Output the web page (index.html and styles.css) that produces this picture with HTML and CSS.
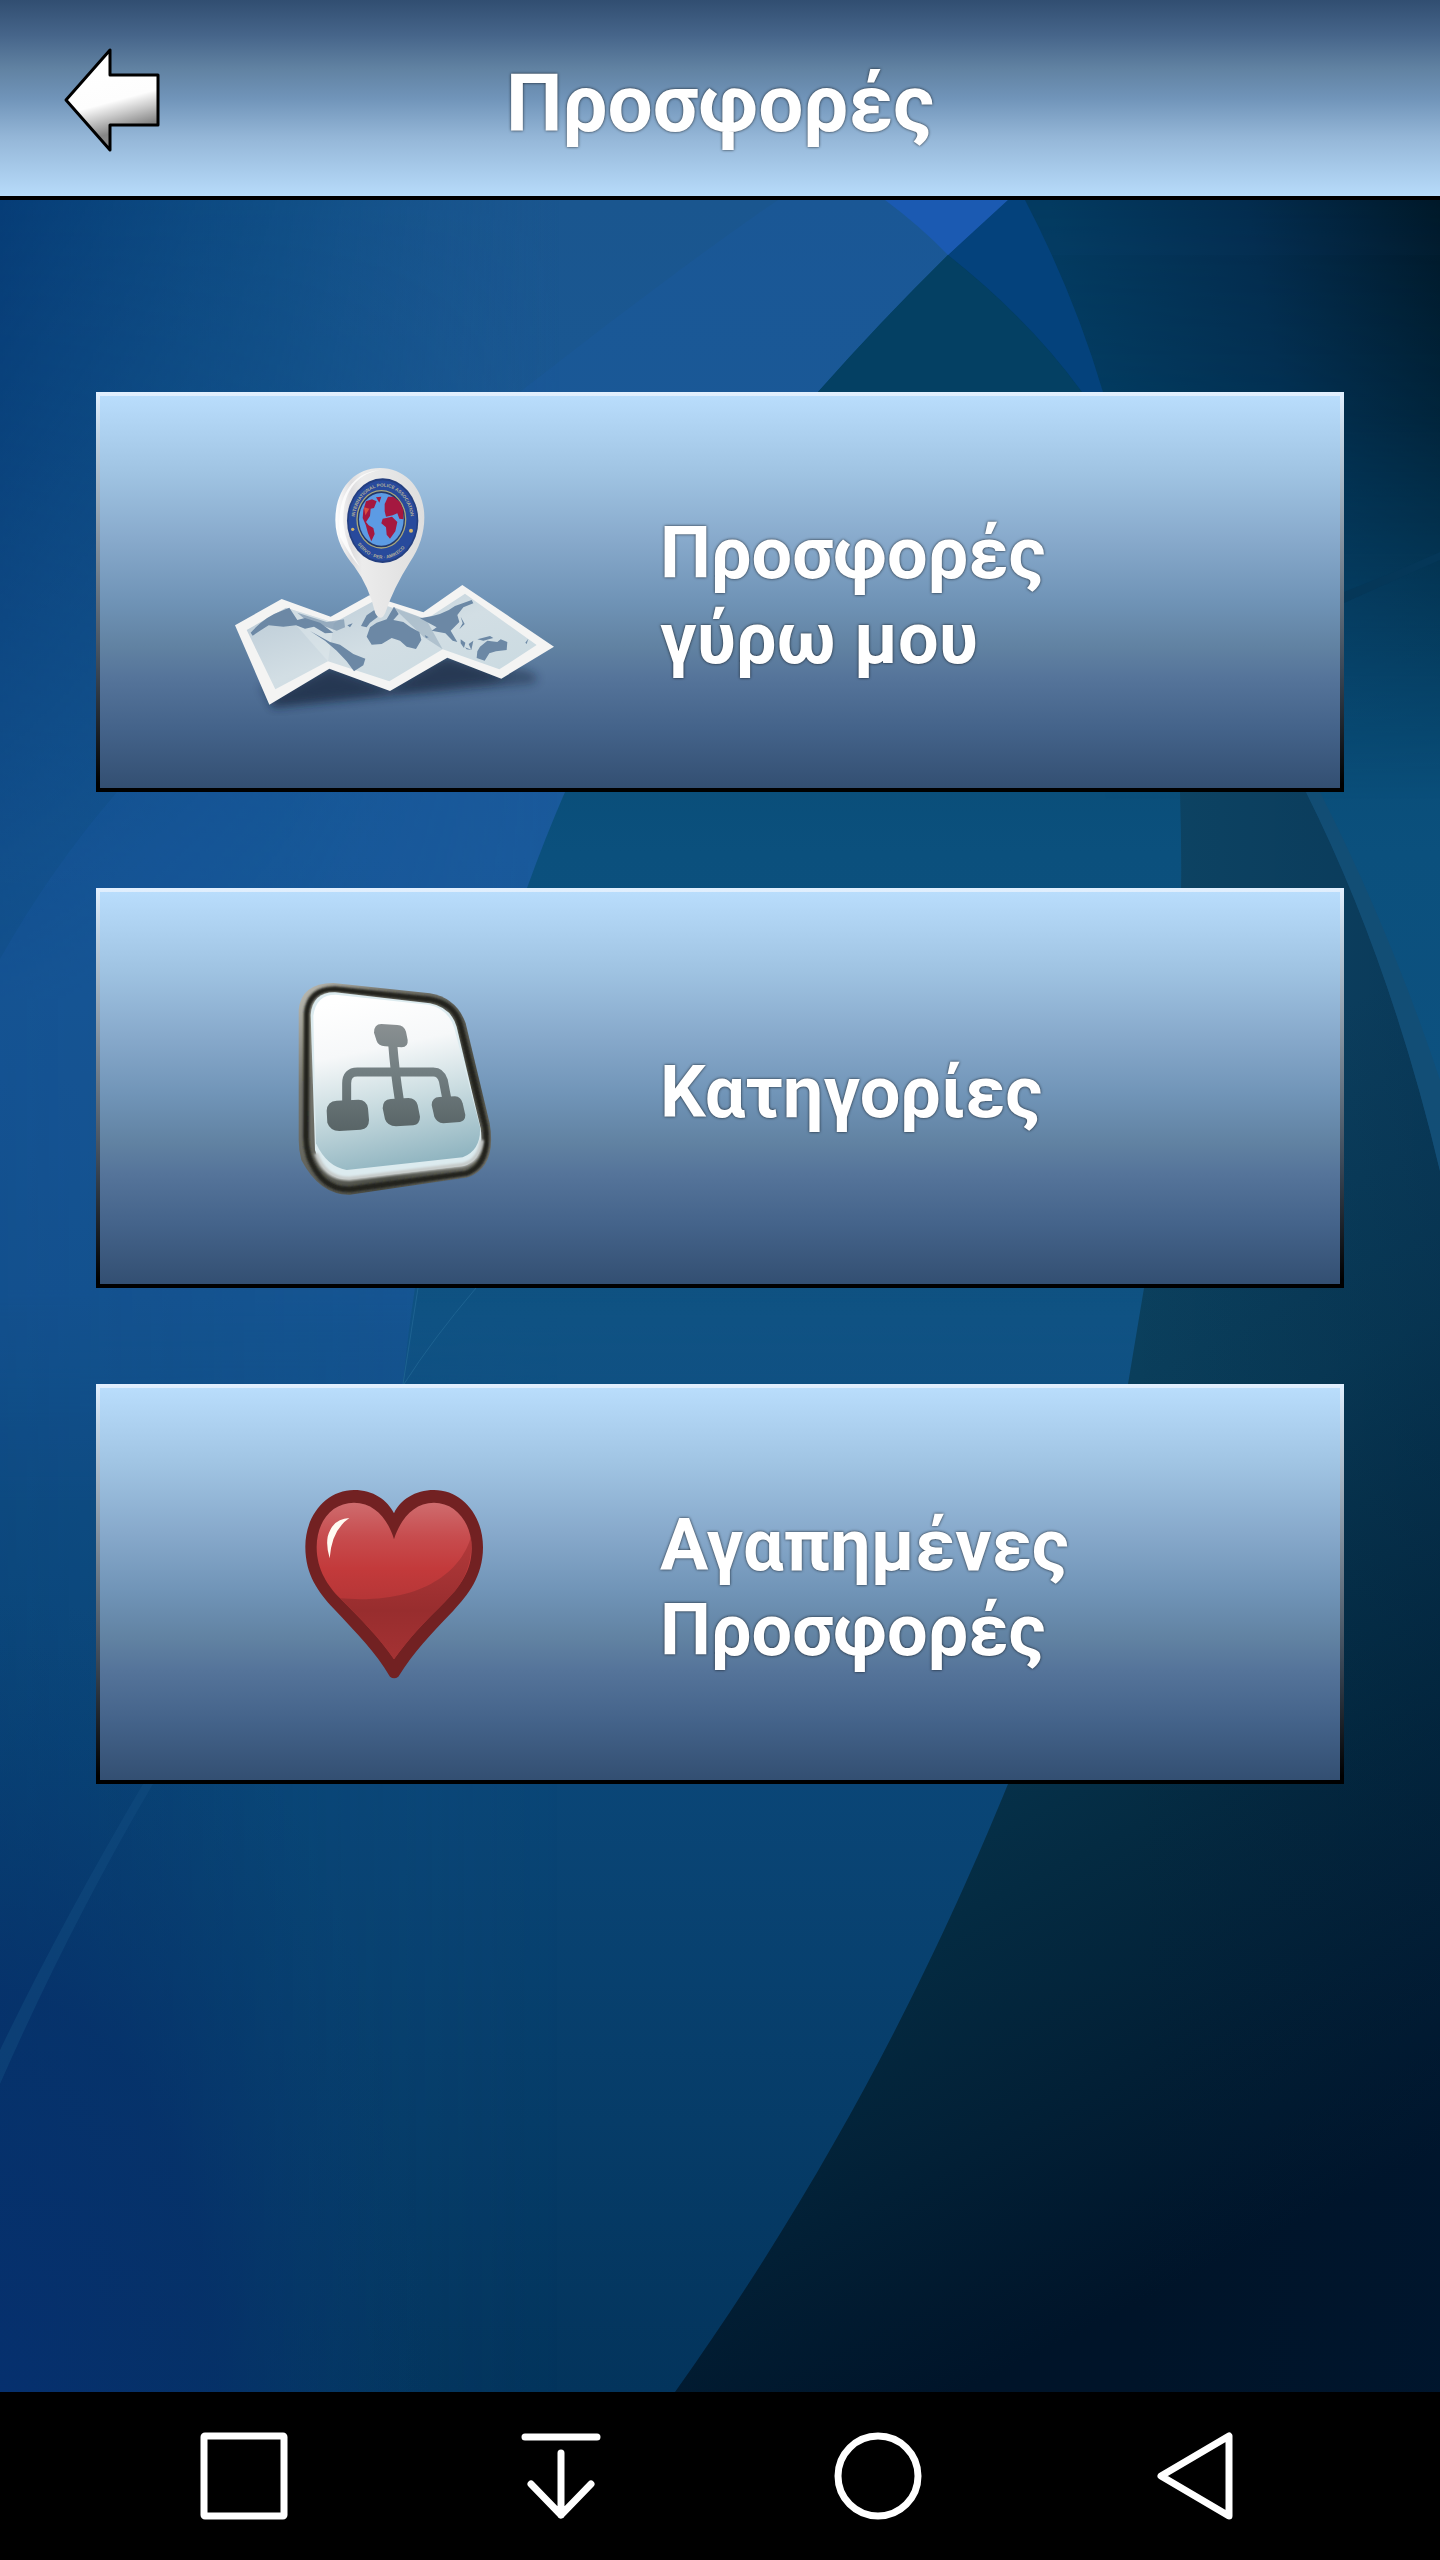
FILE: index.html
```html
<!DOCTYPE html>
<html lang="el">
<head>
<meta charset="utf-8">
<meta name="viewport" content="width=device-width, initial-scale=1">
<title>Προσφορές</title>
<link rel="stylesheet" href="styles.css">
</head>
<body>
<div class="screen">
  <header class="topbar">
    <button class="back" type="button" aria-label="Πίσω">
      <svg width="100" height="108" viewBox="0 0 100 108" aria-hidden="true">
        <defs>
          <linearGradient id="arrowFill" gradientUnits="userSpaceOnUse" x1="42" y1="18" x2="62" y2="92">
            <stop offset="0" stop-color="#fff"/><stop offset=".5" stop-color="#fdfdfd"/>
            <stop offset=".68" stop-color="#c9c9c9"/><stop offset=".9" stop-color="#858585"/><stop offset="1" stop-color="#8a8a8a"/>
          </linearGradient>
        </defs>
        <path d="M4 54 48 4V29H96V79H48V104Z" fill="url(#arrowFill)" stroke="#000" stroke-width="3" stroke-linejoin="round"/>
      </svg>
    </button>
    <h1 class="title">Προσφορές</h1>
  </header>

  <main class="content">
    <svg class="backdrop" viewBox="0 200 1440 2192" preserveAspectRatio="none" aria-hidden="true">
      <defs>
        <linearGradient id="leftFade" x1="0" y1="0" x2="0" y2="1">
          <stop offset="0" stop-color="#1a568f"/><stop offset=".3" stop-color="#195a98"/><stop offset=".5" stop-color="#15548c"/>
          <stop offset=".72" stop-color="#0a4677"/><stop offset="1" stop-color="#03345c"/>
        </linearGradient>
        <linearGradient id="edgeShade" x1="0" y1="0" x2="1" y2="0">
          <stop offset="0" stop-color="#043a74" stop-opacity=".9"/><stop offset=".5" stop-color="#06467c" stop-opacity=".5"/><stop offset="1" stop-color="#15548c" stop-opacity="0"/>
        </linearGradient>
        <linearGradient id="edgeMask" gradientUnits="userSpaceOnUse" x1="0" y1="200" x2="0" y2="1000">
          <stop offset="0" stop-color="#fff"/><stop offset="1" stop-color="#444"/>
        </linearGradient>
        <mask id="fadeEdge" maskUnits="userSpaceOnUse" x="0" y="200" width="560" height="2192"><rect y="200" width="560" height="2192" fill="url(#edgeMask)"/></mask>
        <radialGradient id="corner" gradientUnits="userSpaceOnUse" cx="0" cy="0" r="1" gradientTransform="translate(0 2392) scale(430 800)">
          <stop offset="0" stop-color="#06306e"/><stop offset=".5" stop-color="#062f6a" stop-opacity=".75"/><stop offset="1" stop-color="#083c70" stop-opacity="0"/>
        </radialGradient>
        <linearGradient id="midFade" gradientUnits="userSpaceOnUse" x1="0" y1="255" x2="0" y2="2392">
          <stop offset="0" stop-color="#043e5e"/><stop offset=".08" stop-color="#044568"/><stop offset=".28" stop-color="#0b507d"/>
          <stop offset=".5" stop-color="#0f5282"/><stop offset=".72" stop-color="#074672"/><stop offset="1" stop-color="#03345c"/>
        </linearGradient>
        <linearGradient id="midMask" gradientUnits="userSpaceOnUse" x1="0" y1="1290" x2="0" y2="1560">
          <stop offset="0" stop-color="#fff"/><stop offset="1" stop-color="#000"/>
        </linearGradient>
        <mask id="fadeDown" maskUnits="userSpaceOnUse" x="0" y="200" width="1440" height="2192"><rect y="200" width="1440" height="2192" fill="url(#midMask)"/></mask>
        <linearGradient id="night" gradientUnits="userSpaceOnUse" x1="1060" y1="260" x2="1440" y2="190">
          <stop offset="0" stop-color="#033a60"/><stop offset=".5" stop-color="#032c4e"/><stop offset="1" stop-color="#001828"/>
        </linearGradient>
        <linearGradient id="nightMask" gradientUnits="userSpaceOnUse" x1="0" y1="200" x2="0" y2="800">
          <stop offset="0" stop-color="#fff"/><stop offset=".35" stop-color="#ccc"/><stop offset="1" stop-color="#000"/>
        </linearGradient>
        <mask id="fadeNight" maskUnits="userSpaceOnUse" x="0" y="200" width="1440" height="700"><rect y="200" width="1440" height="700" fill="url(#nightMask)"/></mask>
        <linearGradient id="dark" gradientUnits="userSpaceOnUse" x1="960" y1="1200" x2="1440" y2="2150">
          <stop offset="0" stop-color="#0d4464"/><stop offset=".3" stop-color="#093c58"/><stop offset=".6" stop-color="#042b42"/><stop offset="1" stop-color="#001429"/>
        </linearGradient>
        <linearGradient id="darkEdge" x1="0" y1="0" x2="1" y2="0">
          <stop offset=".6" stop-color="#001a38" stop-opacity="0"/><stop offset="1" stop-color="#001a38" stop-opacity=".25"/>
        </linearGradient>
      </defs>
      <rect y="200" width="1440" height="2192" fill="url(#leftFade)"/>
      <rect y="200" width="560" height="2192" fill="url(#edgeShade)" mask="url(#fadeEdge)"/>
      <path d="M778 200C690 260 600 330 520 392C360 530 215 660 117 792Q50 870 0 959V1500H400L415 1288C480 1000 560 760 818 392L1008 200Z" fill="#1d5cae" opacity=".2" mask="url(#fadeDown)"/>
      <path d="M948 255Q880 322 818 392Q640 600 565 792Q545 838 527 888Q450 1090 415 1288Q407 1340 403 1384L390 1560H1440V255Z" fill="url(#midFade)" mask="url(#fadeDown)"/>
      <path d="M948 255L1005 200H1440V900H1110Q1108 560 948 255Z" fill="url(#night)" mask="url(#fadeNight)"/>
      <path d="M948 255Q880 322 818 392H1082Q1030 320 948 255Z" fill="#044063"/>
      <path d="M948 255L1008 200H1025Q1074 294 1103 392H1082Q1030 320 948 255Z" fill="#04427c"/>
      <path d="M885 200H1008L948 255Q920 226 885 200Z" fill="#1b5ab2"/>
      <rect y="1300" width="700" height="1092" fill="url(#corner)"/>
      <path d="M1344 592Q1395 572 1440 552V560Q1395 580 1344 603Z" fill="#053758"/>
      <path d="M1180 792H1306Q1390 960 1440 1171V2392H675C840 2160 940 1950 1008 1784Q1092 1570 1128 1384L1144 1288Q1188 1040 1180 792Z" fill="url(#dark)"/>
      <path d="M1180 792H1306Q1390 960 1440 1171V2392H675C840 2160 940 1950 1008 1784Q1092 1570 1128 1384L1144 1288Q1188 1040 1180 792Z" fill="url(#darkEdge)"/>
      <path d="M1306 792H1320Q1390 930 1440 1080V1171Q1390 960 1306 792Z" fill="#154d72" opacity=".7"/>
      <path d="M476 1288Q432 1340 404 1384M418 1288L403 1384" fill="none" stroke="#1d6291" stroke-width="1"/>
      <path d="M143 1784Q60 1925 0 2050V2084Q70 1925 153 1784Z" fill="#124c80" opacity=".5"/>
    </svg>

    <nav class="menu" aria-label="Προσφορές">
      <a class="card" href="#nearby">
        <span class="card-icon">
          <svg width="370" height="304" viewBox="0 0 1110 912" aria-hidden="true">
            <defs>
              <linearGradient id="pin" x1="0" y1="0" x2="1" y2="0"><stop offset="0" stop-color="#fff"/><stop offset=".18" stop-color="#dedddf"/><stop offset=".3" stop-color="#ececec"/><stop offset="1" stop-color="#dedede"/></linearGradient>
              <linearGradient id="sheet" x1="0" y1="0" x2="1" y2="1"><stop offset="0" stop-color="#b8c8d4"/><stop offset=".5" stop-color="#d2dee4"/><stop offset="1" stop-color="#c8d9e0"/></linearGradient>
              <filter id="soft" x="-20%" y="-50%" width="140%" height="200%"><feGaussianBlur stdDeviation="14"/></filter>
              <path id="arcTop" d="M434 262A85 106 0 1 1 602 262"/>
              <path id="arcBottom" d="M426 272A95 114 0 0 0 606 284"/>
            </defs>
            <path d="M150 740L190 800Q560 770 960 732Q1010 715 950 690L700 650 350 680Z" fill="#101f33" opacity=".4" filter="url(#soft)"/>
            <path d="M182 780L355 686L540 752L710 650L870 706L900 706L850 725L540 760L190 800Z" fill="#142439" opacity=".5" filter="url(#soft)"/>
            <path d="M75 556 215 477 362 530 478 466 640 517 757 435 1032 620 874 716 712 653 540 753 358 686 178 794Z" fill="#f4f4f3"/>
            <path d="M110 570 228 503 372 548 490 484 648 538 765 461 980 615 868 688 698 628 538 724 354 664 196 748Z" fill="url(#sheet)"/>
            <path d="M228 503 372 548 354 664 245 540Z" fill="#e3ebee" opacity=".45"/>
            <path d="M548 500 648 538 698 628 640 590Z" fill="#9aafc0" opacity=".6"/>
            <g fill="#6c88a5">
              <path d="M122 578Q165 530 212 514L238 503 262 540 285 534 330 548 370 578 345 580 312 560 285 566 258 556 220 560 176 556 150 572 128 587Z"/>
              <path d="M262 518 300 530 350 546 402 538 405 562 380 572 335 556 290 542Z" opacity=".6"/>
              <path d="M300 573 360 606 390 614 430 642 466 656 460 676 432 694 410 664 380 632 345 602Z"/>
              <path d="M412 556 428 550 420 562ZM453 558 470 526 493 510 504 530 480 548 470 562Z"/>
              <path d="M500 548 530 538 552 500 566 522 550 540 580 546 602 562 628 576 634 600 618 627 590 620 570 602 545 594 515 612 485 614 470 590 480 562Z"/>
              <path d="M630 535Q700 526 735 498L785 480 790 490 760 502 742 525 748 546 722 572 742 606 728 602 706 580 665 572 680 562Z"/>
              <path d="M752 530 764 552 748 568 758 550ZM752 598 766 608 762 624 752 610ZM776 612 790 602 784 630ZM802 598 840 588 850 594 820 602ZM765 622 785 630 770 628Z"/>
              <path d="M810 620 832 602 862 606 872 598 892 606 890 630 858 634 838 640 824 662 800 654 802 634ZM946 608 955 596 950 612ZM644 585 656 592 648 594Z"/>
            </g>
            <path d="M510 84C430 84 376 150 376 240C376 300 405 345 432 378Q478 440 496 520Q512 548 526 518Q550 445 600 366C628 325 643 280 643 232C643 145 585 84 510 84Z" fill="url(#pin)"/>
            <path d="M390 290C375 170 430 95 510 91C440 100 395 160 400 250Q408 320 450 380Q420 348 390 290Z" fill="#fff" opacity=".8"/>
            <ellipse cx="518" cy="242" rx="107" ry="127" fill="#243f80"/>
            <ellipse cx="518" cy="242" rx="102" ry="121" fill="#284a9c"/>
            <ellipse cx="514" cy="238" rx="73" ry="86" fill="#243768" stroke="#a9a87c" stroke-width="4"/>
            <ellipse cx="514" cy="238" rx="67" ry="79" fill="#5c9be4"/>
            <path d="M460 210 468 184 486 178 500 184 492 204 482 206 480 228 468 246 476 256 490 264 494 282 484 304 474 280 467 254 458 234ZM498 172 514 170 508 188ZM524 192 534 170 550 170 570 186 580 210 580 238 568 236 562 220 548 226 528 230 524 214ZM518 236 546 230 562 246 556 274 540 296 530 284 528 262 514 250Z" fill="#a51840"/>
            <path d="M462 202 478 206 466 226Z" fill="#db5040"/>
            <g class="seal-text">
              <text><textPath href="#arcTop" startOffset="50%" text-anchor="middle">INTERNATIONAL POLICE ASSOCIATION</textPath></text>
              <text><textPath href="#arcBottom" startOffset="50%" text-anchor="middle">SERVO · PER · AMIKECO</textPath></text>
            </g>
            <g fill="#d5b568"><circle cx="428" cy="268" r="5"/><circle cx="603" cy="272" r="6"/></g>
          </svg>
        </span>
        <span class="card-label">Προσφορές<br>γύρω μου</span>
      </a>

      <a class="card" href="#categories">
        <span class="card-icon">
          <svg width="250" height="256" viewBox="0 0 750 768" aria-hidden="true">
            <defs>
              <linearGradient id="rim" x1="0" y1="0" x2="1" y2="1"><stop offset="0" stop-color="#c0c0b8"/><stop offset=".25" stop-color="#77776f"/><stop offset=".7" stop-color="#4b4d46"/><stop offset="1" stop-color="#85857e"/></linearGradient>
              <linearGradient id="glass" x1=".35" y1="0" x2=".55" y2="1"><stop offset="0" stop-color="#fff"/><stop offset=".3" stop-color="#f6f8f9"/><stop offset=".6" stop-color="#cbdde1"/><stop offset="1" stop-color="#8eb3bf"/></linearGradient>
              <linearGradient id="node" gradientUnits="userSpaceOnUse" x1="0" y1="190" x2="0" y2="515"><stop offset="0" stop-color="#8a9092"/><stop offset=".45" stop-color="#727e81"/><stop offset="1" stop-color="#586466"/></linearGradient>
              <filter id="rimBlur"><feGaussianBlur stdDeviation="3"/></filter>
            </defs>
            <path d="M86 150Q93 70 190 69L480 100Q560 114 587 190L659 490Q681 622 592 652L240 704Q150 706 94 600Q86 570 86 540Z" fill="url(#rim)"/>
            <path d="M110 160Q117 87 195 87L480 118Q555 132 571 195L646 500Q662 612 588 640L240 688Q155 690 117 590Q108 560 108 530Z" fill="none" stroke="#20211c" stroke-width="17" filter="url(#rimBlur)"/>
            <path d="M122 165Q128 96 195 97L480 130Q543 142 560 200L632 505Q645 600 580 618L240 658Q160 661 135 570Z" fill="#dcebef"/>
            <path d="M138 580Q165 658 240 656L580 614Q628 602 636 540" fill="none" stroke="#c5c9c8" stroke-width="12" filter="url(#rimBlur)"/>
            <path d="M130 168Q138 103 198 104L475 134Q535 145 553 205L630 500Q634 570 578 592L230 630Q170 620 138 550Z" fill="url(#glass)"/>
            <path d="M230 424V370Q230 336 262 336H490Q512 336 520 362L530 414M368 250Q374 330 388 420" fill="none" stroke="url(#node)" stroke-width="27"/>
            <g fill="url(#node)">
              <path d="M312 218Q312 192 334 192L382 195Q402 196 408 215L413 240Q415 262 395 262L345 259Q325 258 320 243Z"/>
              <path d="M170 452Q172 423 200 422L265 419Q290 419 294 445L297 480Q297 506 272 509L208 513Q180 512 172 488Z"/>
              <path d="M338 445Q338 418 362 417L415 414Q438 415 443 435L450 470Q450 492 430 496L378 499Q352 498 345 478Z"/>
              <path d="M485 435Q486 412 508 411L555 409Q573 410 578 430L586 465Q586 482 570 486L520 490Q500 488 493 470Z"/>
            </g>
          </svg>
        </span>
        <span class="card-label">Κατηγορίες</span>
      </a>

      <a class="card" href="#favourites">
        <span class="card-icon">
          <svg width="230" height="248" viewBox="0 0 690 744" aria-hidden="true">
            <defs>
              <linearGradient id="heart" gradientUnits="userSpaceOnUse" x1="0" y1="128" x2="0" y2="598"><stop offset="0" stop-color="#cf6c6e"/><stop offset=".22" stop-color="#c74c4e"/><stop offset=".42" stop-color="#c33a3b"/><stop offset=".7" stop-color="#b03435"/></linearGradient>
              <linearGradient id="heartLow" gradientUnits="userSpaceOnUse" x1="0" y1="230" x2="0" y2="598"><stop offset="0" stop-color="#b33a3b"/><stop offset=".6" stop-color="#982d2e"/><stop offset="1" stop-color="#a43233"/></linearGradient>
            </defs>
            <path d="M342 160C360 120 405 90 462 90C545 90 609 165 609 262C609 350 562 408 520 452C450 525 402 575 355 650Q342 660 330 650C285 575 235 525 160 445C115 395 76 345 76 260C76 165 140 90 222 90C280 90 322 120 342 160Z" fill="#722122"/>
            <path d="M342 238C325 180 285 128 222 128C155 128 110 185 110 262C110 330 145 380 180 415C240 475 300 535 342 598C385 535 440 480 495 425C540 378 575 335 575 265C575 185 525 128 462 128C400 128 360 180 342 238Z" fill="url(#heart)"/>
            <path d="M180 415C430 435 545 330 573 230Q582 320 525 394L495 425C440 480 385 535 342 598C300 535 240 475 180 415Z" fill="url(#heartLow)"/>
            <path d="M208 174Q158 176 143 230Q138 260 149 295Q155 210 208 174Z" fill="#fffaf2"/>
          </svg>
        </span>
        <span class="card-label">Αγαπημένες<br>Προσφορές</span>
      </a>
    </nav>
  </main>

  <footer class="sysbar">
    <button class="sys" type="button" aria-label="Πρόσφατα">
      <svg width="88" height="88" viewBox="0 0 88 88" aria-hidden="true"><rect x="4" y="4" width="80" height="80" rx="1"/></svg>
    </button>
    <button class="sys" type="button" aria-label="Ειδοποιήσεις">
      <svg width="88" height="88" viewBox="0 0 88 88" aria-hidden="true"><path d="M8 5H80M44 21V83M14 52 44 83 74 52"/></svg>
    </button>
    <button class="sys" type="button" aria-label="Αρχική">
      <svg width="88" height="88" viewBox="0 0 88 88" aria-hidden="true"><circle cx="44" cy="44" r="40"/></svg>
    </button>
    <button class="sys" type="button" aria-label="Επιστροφή">
      <svg width="88" height="88" viewBox="0 0 88 88" aria-hidden="true"><path d="M10 44 78 4V84Z"/></svg>
    </button>
  </footer>
</div>
</body>
</html>
```
FILE: styles.css
```css
* {
  box-sizing: border-box;
}

body {
  margin: 0;
  background: #000;
  color: #fff;
  font-family: Roboto, "Noto Sans", sans-serif;
}

button {
  padding: 0;
  border: 0;
  background: none;
  cursor: pointer;
}

svg {
  display: block;
}

.screen {
  display: flex;
  flex-direction: column;
  min-height: 100vh;
}

.topbar {
  display: grid;
  grid-template-columns: 1fr auto 1fr;
  align-items: center;
  height: 200px;
  border-bottom: 4px solid #000;
  background: linear-gradient(#314e71, #46658a 18%, #6182a2 35%, #7094b9 50%, #94b6d7 70%, #b7dbfa);
}

.back {
  justify-self: start;
  margin-left: 62px;
  padding-top: 4px;
}

.title {
  margin: 0;
  padding-top: 12px;
  font-size: 80px;
  line-height: 94px;
  font-weight: 700;
  text-shadow: 0 0 3px rgba(0, 0, 0, .8);
}

.content {
  position: relative;
  flex: 1;
  padding: 192px 96px;
}

.backdrop {
  position: absolute;
  inset: 0;
  width: 100%;
  height: 100%;
}

.menu {
  position: relative;
  display: flex;
  flex-direction: column;
  gap: 96px;
}

.card {
  display: grid;
  grid-template-columns: 45% 1fr;
  align-items: center;
  min-height: 400px;
  border: 4px solid;
  border-image: linear-gradient(#e2f0ff, #c4d6e6 10%, #7e8c9a 40%, #394655 70%, #000 98%) 4;
  background: linear-gradient(#b9ddfc, #9fc3e2 20%, #87a9cb 37%, #7094b7 52%, #6182a2 64%, #55749a 72%, #44638a 85%, #334f72);
  color: #fff;
  text-decoration: none;
}

.card-icon {
  display: flex;
  justify-content: center;
  padding-left: 32px;
}

.card-label {
  padding-top: 8px;
  padding-left: 2px;
  font-size: 72px;
  line-height: 85px;
  font-weight: 700;
  text-shadow: 0 0 3px rgba(0, 0, 0, .8);
}

.seal-text {
  fill: #b3b09a;
  font-family: "Liberation Sans", sans-serif;
  font-size: 14px;
  font-weight: 700;
}

.sysbar {
  display: grid;
  grid-template-columns: repeat(4, 1fr);
  height: 168px;
  padding: 0 87px 0 85px;
  background: #000;
}

.sys {
  display: flex;
  align-items: center;
  justify-content: center;
}

.sys svg {
  fill: none;
  stroke: #fff;
  stroke-width: 7;
  stroke-linecap: round;
  stroke-linejoin: round;
}
```
